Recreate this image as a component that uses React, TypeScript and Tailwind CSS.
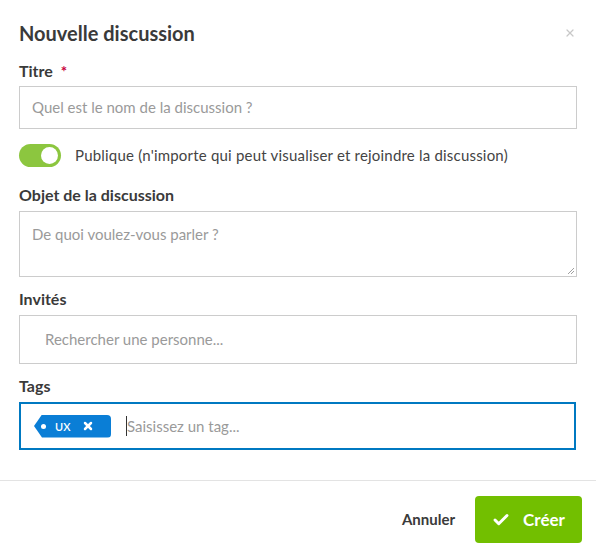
import { Check, X } from "lucide-react";

const font = { fontFamily: "Lato, 'Open Sans', sans-serif" };

const Label = ({ children }: { children: React.ReactNode }) => (
  <div className="text-[16px] font-bold text-[#3a3a3a] leading-5">{children}</div>
);

const App = () => {
  return (
    <div className="w-[596px] h-[558px] bg-white flex flex-col" style={font}>
      <div className="px-[19px] pt-[21px] flex-1">
        {/* Header */}
        <div className="flex items-start justify-between">
          <h1 className="text-[20px] font-bold text-[#3a3a3a] leading-6">Nouvelle discussion</h1>
          <X className="w-[12px] h-[12px] text-[#c8c8c8] mt-[6px] mr-[1px]" strokeWidth={2.5} />
        </div>

        {/* Titre */}
        <div className="mt-[16px] flex items-center gap-[8px]">
          <Label>Titre</Label>
          <span className="text-[#c8003c] font-bold text-[15px] leading-5">*</span>
        </div>
        <div className="mt-[5px] h-[43px] border border-[#cccccc] flex items-center px-[12px] text-[15px] text-[#9a9a9a]">
          Quel est le nom de la discussion ?
        </div>

        {/* Toggle */}
        <div className="mt-[15px] flex items-center gap-[14px]">
          <div className="w-[42px] h-[23px] rounded-full bg-[#8cc63f] flex items-center justify-end px-[3px]">
            <div className="w-[17px] h-[17px] rounded-full bg-white" />
          </div>
          <span className="text-[15px] text-[#444] tracking-[0.2px]">
            Publique (n'importe qui peut visualiser et rejoindre la discussion)
          </span>
        </div>

        {/* Objet */}
        <div className="mt-[18px]">
          <Label>Objet de la discussion</Label>
        </div>
        <div className="mt-[6px] h-[66px] border border-[#cccccc] relative px-[12px] pt-[12px] text-[15px] text-[#9a9a9a] leading-5">
          De quoi voulez-vous parler ?
          <svg className="absolute right-[1px] bottom-[1px]" width="8" height="8" viewBox="0 0 8 8">
            <path d="M7 1 L1 7 M7 4 L4 7" stroke="#888" strokeWidth="0.8" />
          </svg>
        </div>

        {/* Invités */}
        <div className="mt-[12px]">
          <Label>Invités</Label>
        </div>
        <div className="mt-[6px] h-[49px] border border-[#cccccc] flex items-center pl-[25px] text-[15px] text-[#9a9a9a]">
          Rechercher une personne...
        </div>

        {/* Tags */}
        <div className="mt-[12px]">
          <Label>Tags</Label>
        </div>
        <div className="mt-[6px] h-[48px] border-2 border-[#0079c1] flex items-center pl-[13px] mr-[1px]">
          <div className="h-[23px] w-[77px] bg-[#0a7ed6] rounded-r-[4px] flex items-center text-white [clip-path:polygon(8px_0,100%_0,100%_100%,8px_100%,0_50%)]">
            <span className="ml-[7px] w-[5px] h-[5px] rounded-full bg-white" />
            <span className="ml-[9px] text-[11px] font-semibold leading-none">UX</span>
            <X className="ml-[12px] w-[12px] h-[12px]" strokeWidth={5} />
          </div>
          <div className="ml-[15px] w-px h-[20px] bg-[#333]" />
          <span className="text-[15px] text-[#9a9a9a]">Saisissez un tag...</span>
        </div>
      </div>

      {/* Footer */}
      <div className="border-t border-[#e3e3e3] h-[78px] flex items-center justify-end gap-[20px] pr-[14px]">
        <button className="text-[15px] font-bold text-[#3a3a3a]">Annuler</button>
        <button className="h-[47px] w-[107px] rounded-[4px] bg-[#72bf00] text-white flex items-center justify-center gap-[13px] text-[17px] font-bold">
          <Check className="w-[18px] h-[18px]" strokeWidth={4} />
          Créer
        </button>
      </div>
    </div>
  );
};

export default App;
